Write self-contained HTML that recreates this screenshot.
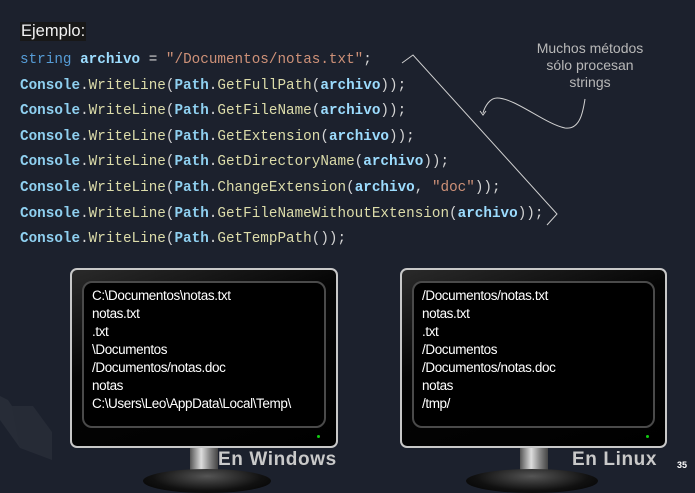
<!DOCTYPE html>
<html><head><meta charset="utf-8"><style>
body{margin:0;width:695px;height:490px;background:#1c212d;overflow:hidden;position:relative;font-family:"Liberation Sans",sans-serif}
.a{position:absolute}
.code{font-family:"Liberation Mono",monospace;font-size:14.3px;color:#9cdcfe;white-space:pre;left:20px;line-height:25.6px;top:48px}
.k{color:#569cd6}.v{color:#9cdcfe;font-weight:bold}.c{color:#8fd0f0;font-weight:bold}.m{color:#dcdcaa}.s{color:#ce9178}.p{color:#d4d4d4}
.mon{border:2px solid #c8c8c8;border-radius:7px;background:linear-gradient(160deg,#2a2a2a,#050505 40%,#000);box-sizing:border-box}
.scr{border:2px solid #4a4a4a;border-radius:10px;background:#000;box-sizing:border-box;position:absolute;left:10px;top:11px;right:10px;bottom:18px}
.t{position:absolute;font-size:13.5px;color:#fff;line-height:18px;white-space:pre;letter-spacing:-0.4px}
.led{position:absolute;width:3px;height:3px;background:#1c1;border-radius:50%}
.neck{background:linear-gradient(90deg,#555,#ddd 40%,#888 70%,#444)}
.base{border-radius:50%;background:radial-gradient(ellipse at 50% 30%,#555,#111 60%,#000)}
.lbl{font-weight:bold;font-size:19px;color:#c9c9c9;letter-spacing:0.6px}
</style></head><body>
<svg class="a" style="left:0;top:0" width="695" height="490">
<polygon points="0,396 8,400 38,445 20,448 0,420" fill="#272c37"/>
<polygon points="12,406 33,406 52,432 52,460 20,448" fill="#262b36"/>
<polyline points="402,63 413,55 557,214 547,225" fill="none" stroke="#d0d0d0" stroke-width="1"/>
<path d="M585,99 C583,112 580,130 565,128 C545,124 515,98 497,98 C490,98 485,106 483,113" fill="none" stroke="#d0d0d0" stroke-width="1"/>
<path d="M480,111 L483,115 L486,111" fill="none" stroke="#d0d0d0" stroke-width="1"/>
</svg>
<div class="a" style="left:20px;top:22px;background:#181818;color:#f2f2f2;font-size:16.5px;padding:0 1px;line-height:19px">Ejemplo:</div>
<div class="a code"><span class="k">string</span> <span class="v">archivo</span> <span class="p">=</span> <span class="s">"/Documentos/notas.txt"</span><span class="p">;</span>
<span class="c">Console</span><span class="p">.</span><span class="m">WriteLine</span><span class="p">(</span><span class="c">Path</span><span class="p">.</span><span class="m">GetFullPath</span><span class="p">(</span><span class="v">archivo</span><span class="p">));</span>
<span class="c">Console</span><span class="p">.</span><span class="m">WriteLine</span><span class="p">(</span><span class="c">Path</span><span class="p">.</span><span class="m">GetFileName</span><span class="p">(</span><span class="v">archivo</span><span class="p">));</span>
<span class="c">Console</span><span class="p">.</span><span class="m">WriteLine</span><span class="p">(</span><span class="c">Path</span><span class="p">.</span><span class="m">GetExtension</span><span class="p">(</span><span class="v">archivo</span><span class="p">));</span>
<span class="c">Console</span><span class="p">.</span><span class="m">WriteLine</span><span class="p">(</span><span class="c">Path</span><span class="p">.</span><span class="m">GetDirectoryName</span><span class="p">(</span><span class="v">archivo</span><span class="p">));</span>
<span class="c">Console</span><span class="p">.</span><span class="m">WriteLine</span><span class="p">(</span><span class="c">Path</span><span class="p">.</span><span class="m">ChangeExtension</span><span class="p">(</span><span class="v">archivo</span><span class="p">,</span> <span class="s">"doc"</span><span class="p">));</span>
<span class="c">Console</span><span class="p">.</span><span class="m">WriteLine</span><span class="p">(</span><span class="c">Path</span><span class="p">.</span><span class="m">GetFileNameWithoutExtension</span><span class="p">(</span><span class="v">archivo</span><span class="p">));</span>
<span class="c">Console</span><span class="p">.</span><span class="m">WriteLine</span><span class="p">(</span><span class="c">Path</span><span class="p">.</span><span class="m">GetTempPath</span><span class="p">());</span></div>
<div class="a" style="left:515px;top:40px;width:150px;text-align:center;color:#b8b8b8;font-size:14px;line-height:17px">Muchos métodos<br>sólo procesan<br>strings</div>

<div class="a neck" style="left:190px;top:445px;width:28px;height:28px"></div>
<div class="a base" style="left:143px;top:469px;width:128px;height:24px"></div>
<div class="a mon" style="left:70px;top:268px;width:268px;height:180px"><div class="scr"></div>
<div class="t" style="left:20px;top:17px">C:\Documentos\notas.txt
notas.txt
.txt
\Documentos
/Documentos/notas.doc
notas
C:\Users\Leo\AppData\Local\Temp\</div><div class="led" style="left:245px;top:165px"></div></div>
<div class="a lbl" style="left:218px;top:449px">En Windows</div>

<div class="a neck" style="left:520px;top:445px;width:28px;height:28px"></div>
<div class="a base" style="left:466px;top:469px;width:132px;height:24px"></div>
<div class="a mon" style="left:400px;top:268px;width:267px;height:180px"><div class="scr"></div>
<div class="t" style="left:20px;top:17px">/Documentos/notas.txt
notas.txt
.txt
/Documentos
/Documentos/notas.doc
notas
/tmp/</div><div class="led" style="left:244px;top:165px"></div></div>
<div class="a lbl" style="left:572px;top:449px">En Linux</div>
<div class="a" style="left:677px;top:460px;color:#fff;font-size:9px;font-weight:bold">35</div>
</body></html>
